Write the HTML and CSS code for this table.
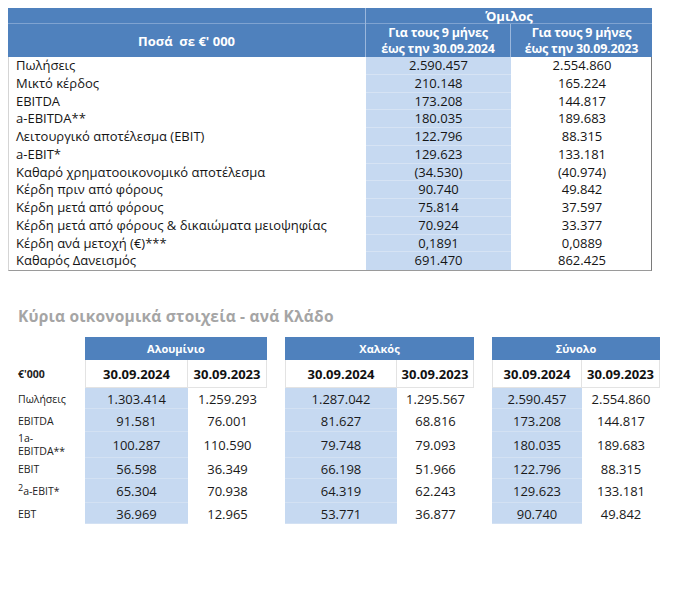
FILE: index.html
```
<!DOCTYPE html>
<html lang="el">
<head>
<meta charset="utf-8">
<link rel="stylesheet" href="styles.css">
</head>
<body>
<div class="group-table">
  <div class="hdr-r1">
    <div class="h1-blank"></div>
    <div class="h1-omilos">Όμιλος</div>
  </div>
  <div class="hdr-r2">
    <div class="h-label">Ποσά&nbsp; σε €' 000</div>
    <div class="h-col">Για τους 9 μήνες<br>έως την 30.09.2024</div>
    <div class="h-col">Για τους 9 μήνες<br>έως την 30.09.2023</div>
  </div>
  <div class="rows">
    <div class="lbl">Πωλήσεις</div><div class="v cur">2.590.457</div><div class="v">2.554.860</div>
    <div class="lbl">Μικτό κέρδος</div><div class="v cur">210.148</div><div class="v">165.224</div>
    <div class="lbl">EBITDA</div><div class="v cur">173.208</div><div class="v">144.817</div>
    <div class="lbl">a-EBITDA**</div><div class="v cur">180.035</div><div class="v">189.683</div>
    <div class="lbl">Λειτουργικό αποτέλεσμα (EBIT)</div><div class="v cur">122.796</div><div class="v">88.315</div>
    <div class="lbl">a-EBIT*</div><div class="v cur">129.623</div><div class="v">133.181</div>
    <div class="lbl">Καθαρό χρηματοοικονομικό αποτέλεσμα</div><div class="v cur">(34.530)</div><div class="v">(40.974)</div>
    <div class="lbl">Κέρδη πριν από φόρους</div><div class="v cur">90.740</div><div class="v">49.842</div>
    <div class="lbl">Κέρδη μετά από φόρους</div><div class="v cur">75.814</div><div class="v">37.597</div>
    <div class="lbl">Κέρδη μετά από φόρους &amp; δικαιώματα μειοψηφίας</div><div class="v cur">70.924</div><div class="v">33.377</div>
    <div class="lbl">Κέρδη ανά μετοχή (€)***</div><div class="v cur">0,1891</div><div class="v">0,0889</div>
    <div class="lbl last">Καθαρός Δανεισμός</div><div class="v cur last">691.470</div><div class="v last">862.425</div>
  </div>
</div>

<h2 class="seg-title">Κύρια οικονομικά στοιχεία - ανά Κλάδο</h2>

<div class="seg">
  <div class="seg-labels">
    <div class="r-h"></div>
    <div class="r-d lab-bold">€'000</div>
    <div class="r1 lab">Πωλήσεις</div>
    <div class="r2 lab">EBITDA</div>
    <div class="r3 lab two"><span>1a-<br>EBITDA**</span></div>
    <div class="r4 lab">EBIT</div>
    <div class="r5 lab"><span><sup>2</sup>a-EBIT*</span></div>
    <div class="r6 lab">EBT</div>
  </div>

  <div class="sg sg-alu">
    <div class="r-h sg-head">Αλουμίνιο</div>
    <div class="r-d dt">30.09.2024</div><div class="r-d dt">30.09.2023</div>
    <div class="r1 n cur">1.303.414</div><div class="r1 n">1.259.293</div>
    <div class="r2 n cur">91.581</div><div class="r2 n">76.001</div>
    <div class="r3 n cur">100.287</div><div class="r3 n">110.590</div>
    <div class="r4 n cur">56.598</div><div class="r4 n">36.349</div>
    <div class="r5 n cur">65.304</div><div class="r5 n">70.938</div>
    <div class="r6 n cur">36.969</div><div class="r6 n">12.965</div>
  </div>

  <div class="sg sg-cu">
    <div class="r-h sg-head">Χαλκός</div>
    <div class="r-d dt">30.09.2024</div><div class="r-d dt">30.09.2023</div>
    <div class="r1 n cur">1.287.042</div><div class="r1 n">1.295.567</div>
    <div class="r2 n cur">81.627</div><div class="r2 n">68.816</div>
    <div class="r3 n cur">79.748</div><div class="r3 n">79.093</div>
    <div class="r4 n cur">66.198</div><div class="r4 n">51.966</div>
    <div class="r5 n cur">64.319</div><div class="r5 n">62.243</div>
    <div class="r6 n cur">53.771</div><div class="r6 n">36.877</div>
  </div>

  <div class="sg sg-tot">
    <div class="r-h sg-head">Σύνολο</div>
    <div class="r-d dt">30.09.2024</div><div class="r-d dt">30.09.2023</div>
    <div class="r1 n cur">2.590.457</div><div class="r1 n">2.554.860</div>
    <div class="r2 n cur">173.208</div><div class="r2 n">144.817</div>
    <div class="r3 n cur">180.035</div><div class="r3 n">189.683</div>
    <div class="r4 n cur">122.796</div><div class="r4 n">88.315</div>
    <div class="r5 n cur">129.623</div><div class="r5 n">133.181</div>
    <div class="r6 n cur">90.740</div><div class="r6 n">49.842</div>
  </div>
</div>
</body>
</html>
```
FILE: styles.css
```
* { box-sizing: border-box; }
html, body { margin: 0; padding: 0; background: #fff; }
body {
  font-family: "Open Sans", "Noto Sans", sans-serif;
  color: #151515;
  width: 685px;
  height: 596px;
  overflow: hidden;
}

/* ---------- Top table ---------- */
.group-table {
  margin: 8px 0 0 8px;
  width: 644px;
}
.hdr-r1, .hdr-r2, .rows {
  display: grid;
  grid-template-columns: 357px 145px 142px;
}
.hdr-r1 {
  height: 16px;
  background: #4f81bd;
  border-bottom: 1px solid #7fa3d1;
}
.h1-omilos {
  grid-column: 2 / 4;
  text-align: center;
  color: #fff;
  font-weight: 700;
  font-size: 13px;
  line-height: 16px;
  border-left: 1px solid #9bb7dc;
}
.hdr-r2 {
  height: 33px;
  background: #4f81bd;
  color: #fff;
  font-weight: 700;
  font-size: 12.5px;
}
.h-label {
  display: flex;
  align-items: center;
  justify-content: center;
  white-space: pre;
  font-size: 13px;
}
.h-col {
  text-align: center;
  line-height: 15.5px;
  padding-top: 1px;
  letter-spacing: -0.2px;
  white-space: nowrap;
  border-left: 1px solid #9bb7dc;
}
.rows {
  grid-auto-rows: 17.75px;
  font-size: 13px;
  line-height: 17.75px;
  border-left: 1px solid #d5d5d5;
  border-right: 1px solid #7a7a7a;
  border-bottom: 1px solid #9a9a9a;
}
.lbl {
  padding-left: 7px;
  white-space: nowrap;
}
.v { text-align: center; }
.v.cur {
  background: #c6d9f1;
  border-bottom: 1px solid #d6e3f4;
}
.v.cur.last { border-bottom: none; }

/* ---------- Segment title ---------- */
.seg-title {
  margin: 35px 0 11px 18px;
  font-size: 15.5px;
  line-height: 20px;
  font-weight: 700;
  color: #a5a5a5;
  letter-spacing: 0.2px;
}

/* ---------- Segment tables ---------- */
.seg {
  display: flex;
  gap: 18px;
}
.seg-labels {
  width: 85px;
  margin-right: -18px;
  padding-left: 18px;
  display: flex;
  flex-direction: column;
}
.sg {
  display: grid;
  grid-template-rows: 23px 28px 21px 23px 26px 21px 24px 21px;
}
.sg-alu { grid-template-columns: 103px 79px; }
.sg-cu { grid-template-columns: 112px 77px; }
.sg-tot { grid-template-columns: 90px 78px; }

.r-h { height: 23px; }
.r-d { height: 28px; }
.r1 { height: 21px; }
.r2 { height: 23px; }
.r3 { height: 26px; }
.r4 { height: 21px; }
.r5 { height: 24px; }
.r6 { height: 21px; }

.sg-head {
  grid-column: 1 / 3;
  background: #4f81bd;
  color: #fff;
  font-weight: 700;
  font-size: 11px;
  display: flex;
  align-items: center;
  justify-content: center;
}
.dt {
  display: flex;
  align-items: center;
  justify-content: center;
  font-weight: 700;
  font-size: 13px;
  border: 1px solid #e3e3e3;
  border-top: none;
  color: #111;
}
.dt + .dt { border-left: none; }
.n {
  display: flex;
  align-items: center;
  justify-content: center;
  font-size: 13px;
  color: #1a1a1a;
}
.n.cur {
  background: #c6d9f1;
  box-shadow: inset 0 -1px 0 #d3e1f3;
}
.lab, .lab-bold {
  display: flex;
  align-items: center;
  font-size: 10.5px;
  color: #222;
}
.lab-bold { font-weight: 700; }
.lab.two span {
  display: block;
  line-height: 13px;
}
.lab sup {
  font-size: 9px;
  vertical-align: 4px;
  line-height: 0;
}
```
